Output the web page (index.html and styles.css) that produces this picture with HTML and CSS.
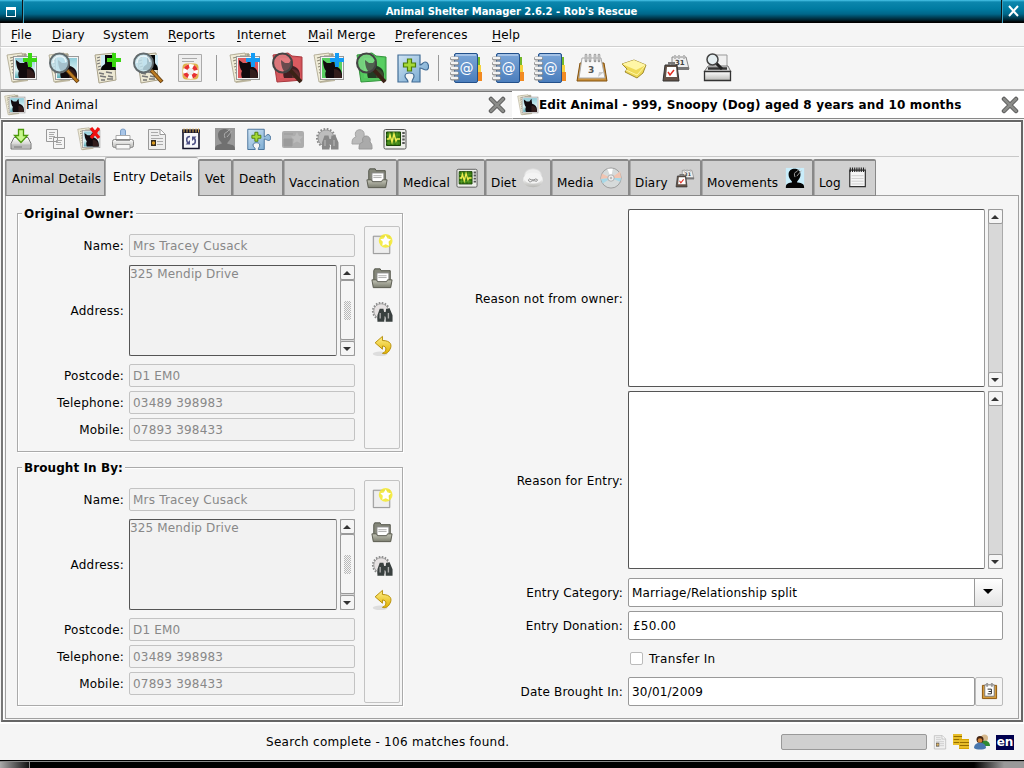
FILE: index.html
```
<!DOCTYPE html>
<html lang="en">
<head>
<meta charset="utf-8">
<title>Animal Shelter Manager 2.6.2 - Rob's Rescue</title>
<link rel="stylesheet" href="styles.css">
</head>
<body>
<svg class="sprite" aria-hidden="true">
  <defs>
    <linearGradient id="sky" x1="0" y1="0" x2="0" y2="1"><stop offset="0" stop-color="#8fcbd8"/><stop offset=".6" stop-color="#d8f2f4"/><stop offset="1" stop-color="#58a9b3"/></linearGradient>
    <linearGradient id="metal" x1="0" y1="0" x2="0" y2="1"><stop offset="0" stop-color="#fff"/><stop offset="1" stop-color="#b8b8b5"/></linearGradient>
    <linearGradient id="blue" x1="0" y1="0" x2="1" y2="1"><stop offset="0" stop-color="#cfe4f4"/><stop offset="1" stop-color="#6fa3cd"/></linearGradient>
    <linearGradient id="book" x1="0" y1="0" x2="0" y2="1"><stop offset="0" stop-color="#7ba6d8"/><stop offset="1" stop-color="#4a7dbc"/></linearGradient>
    <linearGradient id="folder" x1="0" y1="0" x2="0" y2="1"><stop offset="0" stop-color="#c4c5b7"/><stop offset="1" stop-color="#7c7e70"/></linearGradient>
    <linearGradient id="gold" x1="0" y1="0" x2="0" y2="1"><stop offset="0" stop-color="#fff08a"/><stop offset="1" stop-color="#e0b000"/></linearGradient>
  </defs>
  <symbol id="pages" viewBox="0 0 32 32">
    <path d="M5 2l15-1 2 28-15 2z" fill="#bdb7a0"/><path d="M1 3l15-2 5 26-15 3z" fill="#f0ecd8" stroke="#aaa38c" stroke-width=".8"/>
    <path d="M4 6l4-1M4 9l3-1M5 12l3-1M5 15l3-1M6 18l3-1M6 21l3-1M7 24l4-1M7 27l6-1M11 4h5M18 3h3" stroke="#8f8a76" stroke-width="1.1"/>
  </symbol>
  <symbol id="cat" viewBox="0 0 32 32">
    <path d="M10 8l4 3h4l3-4 1 7c4 1 7 4 7 9v3H13c-1-3-1-5 0-7-2-2-3-7-3-11z" fill="#120a0e"/><path d="M21 17c4 0 8 3 8 9h-8z" fill="#331d1c"/>
  </symbol>
  <symbol id="animal" viewBox="0 0 32 32">
    <use href="#pages"/>
    <rect x="7.500" y="4.500" width="23" height="23" fill="#f4f4f4" stroke="#999"/>
    <rect x="9" y="6" width="20" height="20" fill="url(#sky)"/>
    <use href="#cat"/>
  </symbol>
  <symbol id="person" viewBox="0 0 32 32">
    <path d="M2 3l19-2 2 27-17 3z" fill="#ece8d3" stroke="#aaa38c"/><path d="M4 6l3-1M4 9l3-1M4 12l3-1M5 15l3-1M5 18l3-1" stroke="#777" stroke-width="1.200"/>
    <path d="M8 3h15v15H8z" fill="#cdeaf5"/><path d="M12 3h8v7c0 3 3 2 3 8H8c0-6 5-4 4-8z" fill="#050505"/>
    <path d="M6 21l5 1M13 20l6 1M7 24l6 1M15 24l5 1M8 28l4 0M14 27l6 0" stroke="#777" stroke-width="1.300"/>
  </symbol>
  <symbol id="lens" viewBox="0 0 32 32">
    <path d="M19 18l11 12" stroke="#5e3a10" stroke-width="4"/><path d="M19.500 18.500l10 11" stroke="#bc7b20" stroke-width="2.400"/>
    <circle cx="11.500" cy="11" r="9.500" fill="#bfe0ec" fill-opacity=".85" stroke="#626b6e" stroke-width="2"/><path d="M5 11c0-9 12-9 13-1" stroke="#fff" stroke-width="1.500" fill="none" opacity=".7"/>
  </symbol>
  <symbol id="lensclear" viewBox="0 0 32 32">
    <path d="M19 18l11 12" stroke="#3a2216" stroke-width="4"/>
    <circle cx="11.500" cy="11" r="9.500" fill="#fff" fill-opacity=".2" stroke="#444" stroke-width="2"/>
  </symbol>
  <symbol id="plus" viewBox="0 0 16 16"><path d="M6 1h4v5h5v4h-5v5H6v-5H1V6h5z" fill="currentColor"/></symbol>
  <symbol id="ringhelp" viewBox="0 0 32 32">
    <path d="M4.500 2.500h23v27h-23z" fill="#eee" stroke="#aaa"/><path d="M8 6.500h15M8 9.500h12" stroke="#aaa"/>
    <rect x="8.500" y="11.500" width="16" height="16" rx="4" fill="#e0b14a"/><circle cx="16.500" cy="19.500" r="5.500" fill="#eee" stroke="#fff" stroke-width="4"/><circle cx="16.500" cy="19.500" r="5.500" fill="none" stroke="#e73131" stroke-width="4" stroke-dasharray="4.320 4.320" stroke-dashoffset="-2.160"/>
  </symbol>
  <symbol id="puzzle" viewBox="0 0 32 32">
    <path d="M1 3h22v10c2 0 3-3 5-3 4 0 5 8 1 8-2 0-4-2-6-2v14h-8c0-3 2-3 2-6 0-4-9-4-9 0 0 3 3 3 3 6H1z" fill="url(#blue)" stroke="#426d96" stroke-width="1.200"/>
    <path d="M10.500 7h4v4h4v4h-4v4h-4v-4h-4v-4h4z" fill="#a5d936" stroke="#4c7c08" stroke-width="1.200"/>
  </symbol>
  <symbol id="address" viewBox="0 0 32 32">
    <path d="M27 5h3v9h-3z" fill="#73b82a"/><path d="M27 13h4v8h-4z" fill="#f5d33e"/><path d="M27 20h5v9h-5z" fill="#f28a22"/>
    <rect x="4.500" y="1.500" width="23" height="29" rx="1.500" fill="url(#book)" stroke="#22508b"/><path d="M6 3h20" stroke="#cfe0f5"/>
    <path d="M2 6.500h5M2 11.500h5M2 16.500h5M2 21.500h5M2 26.500h5" stroke="#888" stroke-width="4" stroke-linecap="round"/><path d="M2 6h5M2 11h5M2 16h5M2 21h5M2 26h5" stroke="#f3f3f3" stroke-width="2.600" stroke-linecap="round"/>
  </symbol>
  <symbol id="calendar" viewBox="0 0 32 32">
    <path d="M4 11h24l3 18H1z" fill="#cc913b" stroke="#82500c"/><path d="M6 6h19l4 20H3z" fill="#f8f8f8" stroke="#aaa"/><path d="M22 25l1-5h5z" fill="#ccc"/>
    <path d="M10 3v6M14 3v6M19 3v6M23 3v6" stroke="#999" stroke-width="2.600" stroke-linecap="round"/><path d="M10 3v5M14 3v5M19 3v5M23 3v5" stroke="#ddd" stroke-width="1" stroke-linecap="round"/>
  </symbol>
  <symbol id="note" viewBox="0 0 32 32"><path d="M4 12l12-4 12 5-3 8-6 5-12-6 2-3z" fill="#eed957" stroke="#8d7413" stroke-width=".8"/><path d="M4 12l12-4 12 5-10 5z" fill="#fff6a6"/><path d="M8 18l11 5 8-9" stroke="#fff6a6" fill="none"/></symbol>
  <symbol id="diary" viewBox="0 0 32 32">
    <path d="M12 5h14l3 12H12z" fill="#eee" stroke="#888"/><path d="M12 15h17v3H12z" fill="#777"/><path d="M15 3v4M19 3v4M24 3v4" stroke="#bbb" stroke-width="2"/>
    <path d="M5 13h12l2 16H3z" fill="#645247" stroke="#333"/><path d="M7 15h9l1 10H6z" fill="#fff"/><path d="M9 13v-2h5v2" stroke="#777" fill="none" stroke-width="2"/><path d="M8 20l2 3 4-5" stroke="#e32c20" stroke-width="1.500" fill="none"/>
  </symbol>
  <symbol id="printsearch" viewBox="0 0 32 32">
    <path d="M8 3h17v15H8z" fill="#f0f0f0" stroke="#999"/><path d="M6 14h20l3 6H2z" fill="#ddd" stroke="#777"/><path d="M2.500 19.500h26v9h-26z" fill="url(#metal)" stroke="#333" stroke-width="1.300"/><path d="M6 16.500h19" stroke="#333" stroke-width="2.500"/><path d="M14 11l6 6" stroke="#222" stroke-width="3"/><circle cx="10.500" cy="7.500" r="5.500" fill="#e5eef1" stroke="#444" stroke-width="1.500"/>
  </symbol>
  <symbol id="close" viewBox="0 0 18 18"><path d="M3 3l12 12M15 3L3 15" stroke="#5b5b5b" stroke-width="4.500" stroke-linecap="round"/><path d="M3 3l12 12M15 3L3 15" stroke="#8b8c89" stroke-width="2.500" stroke-linecap="round"/></symbol>
  <symbol id="save" viewBox="0 0 24 24"><path d="M5 10.500h14l3 6v5.500H2v-5.500z" fill="url(#metal)" stroke="#777"/><path d="M3 17.500h18v4H3z" fill="#bbb"/><path d="M5 20h8" stroke="#777"/><path d="M9.500 2.500h5v6h4l-6.500 7-6.500-7h4z" fill="#c8f78d" stroke="#4b9a0b" stroke-width="1.300"/></symbol>
  <symbol id="copy" viewBox="0 0 24 24"><path d="M3.500 2.500h11v12h-11zM10.500 10.500h11v11h-11z" fill="#f5f5f5" stroke="#999"/><path d="M6 5.500h6M6 7.500h5M6 9.500h6M6 11.500h3M13 13.500h6M13 15.500h5M13 17.500h6" stroke="#aaa"/></symbol>
  <symbol id="redx" viewBox="0 0 12 12"><path d="M2 1l8 10M10 1L2 11" stroke="#f01010" stroke-width="3.200"/></symbol>
  <symbol id="print" viewBox="0 0 24 24"><path d="M9.500 11V4q0-2 2.500-2t2.500 2v7z" fill="#a9c6e8" stroke="#7c9fc7"/><path d="M5 8.500h14v6H5z" fill="#fff" stroke="#aaa"/><rect x="1.500" y="12.500" width="21" height="8" rx="2" fill="url(#metal)" stroke="#888"/><path d="M5 17.500h14v4.500H5z" fill="#f7f7f7" stroke="#999"/><path d="M5 13.500h14" stroke="#999"/></symbol>
  <symbol id="doc" viewBox="0 0 24 24"><path d="M3.500 2.500h12l5 5v15h-17z" fill="#eee" stroke="#999"/><path d="M15 2.500v5h5" fill="#fff" stroke="#999"/><path d="M6 5.500h7M6 8.500h8M6 11.500h12M12 14.500h6M12 17.500h6" stroke="#aaa"/><path d="M6 13h5v6H6z" fill="#352c20"/><circle cx="8.500" cy="16" r="1.700" fill="#db9c22"/></symbol>
  <symbol id="sync" viewBox="0 0 24 24"><path d="M4 3h16v18.500H4z" fill="#f7f7fa" stroke="#15152c" stroke-width="1.600"/><path d="M3.500 3h17v3h-17z" fill="#15152c"/><path d="M5 1.500v4M8 1.500v4M11 1.500v4M14 1.500v4M17 1.500v4M19.500 1.500v4" stroke="#d8a84b"/><path d="M11 9.500c-4 0-4 4-2 7M13 17.500c4 0 4-4 2-7" fill="none" stroke="#4f5287" stroke-width="1.600"/><path d="M6.500 17.500h4.500v-4.500zM17.500 9.500H13V14z" fill="#4f5287"/></symbol>
  <symbol id="portrait" viewBox="0 0 24 24"><path class="backdrop" d="M2 1h20v22H2z"/><path class="figure" d="M2 23c0-5 2-5 6-6 1 0 1-1 0-2-2-2-3-4-3-7 0-8 13-8 13 0 0 3-1 5-3 7-1 1-1 2 0 2 5 1 7 1 7 6z"/><path d="M12 11q-2-5 2-6l3-3M14 10l5-6" stroke="#aaa" fill="none"/></symbol>
  <symbol id="card" viewBox="0 0 24 24"><rect x="1" y="4" width="22" height="17" rx="2" fill="#adadad"/><path d="M3 12h8v7H3zM3 7h9" fill="#9b9b9b" stroke="#9b9b9b"/><path d="M16 5l2 4 4 .5-3 3 1 4-4-2-4 2 1-4-3-3 4-.5z" fill="#bbb"/></symbol>
  <symbol id="binos" viewBox="0 0 24 24"><circle cx="11" cy="11" r="9" fill="none" stroke="#888" stroke-width="2" stroke-dasharray="1.700 1.600"/><circle cx="11" cy="11" r="8" fill="var(--gear, #e6e2e2)" stroke="#999"/><path d="M9.500 8.500h4l1 4v10H7v-7zM16.500 8.500h4l3 7v7H16V12z" fill="currentColor"/><path d="M13 12h5v5h-5z" fill="currentColor"/><path d="M10 13v6M19 13v6" stroke="#aaa" stroke-width="1.500"/></symbol>
  <symbol id="people" viewBox="0 0 24 24"><path d="M3 17c0-5 1-6 4-7-4-9 10-10 8-1 4 2 4 4 4 8z" fill="#bbb" stroke="#a5a5a5"/><path d="M10 22c0-5 1-6 4-7-3-8 9-8 7 0 2 2 2 3 2 7z" fill="#aaa" stroke="#999"/></symbol>
  <symbol id="monitor" viewBox="0 0 24 24"><rect x="1" y="2.500" width="22" height="19.500" rx="1.500" fill="#eceee9" stroke="#555"/><path d="M3.500 5h14v13.500h-14z" fill="#35780e" stroke="#1a4408"/><path d="M3 8h14M3 12h14M3 16h14M6 5v13M10 5v13M14 5v13" stroke="#62a836" stroke-width=".6"/><path d="M4 12h2l1-4 2 7 2-8 2 7 1-2h3" stroke="#f0ec52" stroke-width="1.400" fill="none"/><path d="M20.500 5v13" stroke="#555" stroke-width="2.500" stroke-dasharray="2 1.300"/></symbol>
  <symbol id="folderopen" viewBox="0 0 24 24"><path d="M3 4l1-2h6l1 2h10v16H3z" fill="#85877a" stroke="#4c4e43"/><path d="M6.500 6.500h13v10h-13z" fill="#fff" stroke="#888"/><path d="M8 9.500h9M8 11.500h9" stroke="#aaa"/><path d="M1 14h5l1 2h10l1-2h5l-1.500 8.500h-19z" fill="url(#folder)" stroke="#55574b"/></symbol>
  <symbol id="food" viewBox="0 0 24 24"><ellipse cx="12" cy="8" rx="9" ry="6" fill="#eee" stroke="#ddd"/><path d="M2 11h20l1 4q-2 7-11 7T1 15z" fill="url(#metal)"/><ellipse cx="12" cy="12" rx="10" ry="6" fill="#f4f4f4"/><path d="M7 14q1-2 3 0h3q2-2 4 0-1 3-3 1h-3q-3 3-4-1z" fill="none" stroke="#888"/></symbol>
  <symbol id="disc" viewBox="0 0 24 24"><circle cx="12" cy="12" r="11" fill="#d6dada" stroke="#999"/><path d="M12 12L2 7l-1 6zM12 12l10-7 1 7z" fill="#f1c4b1"/><path d="M12 12L1 13l2 5zM12 12l11 0-1 4z" fill="#a7d8e7"/><path d="M12 12L8 2h6z" fill="#fff"/><circle cx="12" cy="12" r="3.500" fill="#eee" stroke="#aaa"/><circle cx="12" cy="12" r="1.300" fill="#bbb"/></symbol>
  <symbol id="pad" viewBox="0 0 24 24"><path d="M3 3.500h17v18H3z" fill="#f5f5f5" stroke="#333" stroke-width="1.300"/><path d="M5 9.500h13M5 12.500h13M5 15.500h13M5 18.500h13" stroke="#ccc"/><path d="M3 3h17" stroke="#222" stroke-width="5" stroke-dasharray="1.200 1.200"/></symbol>
  <symbol id="newdoc" viewBox="0 0 24 24"><path d="M2.500 3.500h18v19h-18z" fill="#e6e6e6" stroke="#8b8b8b"/><path d="M4 5h15v16H4z" fill="#eee"/><circle cx="16" cy="8.500" r="7.500" fill="#f5ea2c" opacity=".85"/><path d="M16 2.500l2 3.400 3.800.9-2.700 2.800.6 4.400-3.700-1.800-3.700 1.800.6-4.400-2.700-2.800 3.800-.9z" fill="#fff"/></symbol>
  <symbol id="undo" viewBox="0 0 24 24"><ellipse cx="10" cy="20.500" rx="8" ry="2.500" fill="#ddd"/><path d="M4.500 8.500l8-7v4.500c9 0 11 5 8 10-2 4-5 5-8 4 5-2 5-8 0-8v3.500z" fill="url(#gold)" stroke="#b38a00"/></symbol>
  <symbol id="coins" viewBox="0 0 16 16"><path d="M0 0h9v11H0zM6 5h10v10H6z" fill="#d8a500"/><path d="M0 1h9M0 4h9M0 7h6M0 10h6M6 7h10M6 10h10M6 13h10" stroke="#ffe36a" stroke-width=".8"/><path d="M1 2.500h8M1 5.500h5M1 8.500h5M7 8.500h9M7 11.500h9" stroke="#8d6800" stroke-width=".9"/></symbol>
  <symbol id="users" viewBox="0 0 16 16"><circle cx="10.500" cy="4" r="3.500" fill="#d6b88c"/><path d="M6 12c0-7 10-7 10 0z" fill="#2f8a33"/><circle cx="6" cy="5.500" r="3.500" fill="#422414"/><circle cx="6" cy="6.500" r="2.300" fill="#d48235"/><path d="M0 14c0-7 12-7 12 0-2 2-10 2-12 0z" fill="#4877ae"/></symbol>
</svg>

<div class="window">
  <header class="titlebar">
    <span class="winmenu"><i></i></span>
    <h1>Animal Shelter Manager 2.6.2 - Rob's Rescue</h1>
    <svg class="winclose" viewBox="0 0 21 23"><path d="M6 6l9 10M15 6L6 16" stroke="#fff" stroke-width="2"/></svg>
  </header>

  <nav class="menubar">
    <span><u>F</u>ile</span><span><u>D</u>iary</span><span>System</span><span><u>R</u>eports</span><span><u>I</u>nternet</span><span><u>M</u>ail Merge</span><span><u>P</u>references</span><span><u>H</u>elp</span>
  </nav>

  <div class="toolbar">
    <span class="tool"><svg><use href="#animal"/><use class="lime" href="#plus" x="16" y="0" width="16" height="16"/></svg></span>
    <span class="tool"><svg><use href="#animal"/><use href="#lens"/></svg></span>
    <span class="tool"><svg><use href="#person" x="3"/><use class="lime" href="#plus" x="16" y="0" width="16" height="16"/></svg></span>
    <span class="tool"><svg><use href="#person" x="3"/><use href="#lens"/></svg></span>
    <span class="tool"><svg><use href="#ringhelp"/></svg></span>
    <i class="sep"></i>
    <span class="tool red"><svg><use href="#animal"/><rect class="tint" x="9" y="6" width="20" height="20"/><use href="#cat"/><use class="azure" href="#plus" x="16" y="0" width="16" height="16"/></svg></span>
    <span class="tool red"><svg><path class="sheet" d="M2 3l15-2 4 3 10 1v23l-11 1-14 1z"/><rect class="tint" x="9" y="6" width="20" height="20"/><use class="dim" href="#cat"/><use href="#lensclear"/></svg></span>
    <span class="tool green"><svg><use href="#animal"/><rect class="tint" x="9" y="6" width="20" height="20"/><use href="#cat"/><use class="azure" href="#plus" x="16" y="0" width="16" height="16"/></svg></span>
    <span class="tool green"><svg><path class="sheet" d="M2 3l15-2 4 3 10 1v23l-11 1-14 1z"/><rect class="tint" x="9" y="6" width="20" height="20"/><use class="dim" href="#cat"/><use href="#lensclear"/></svg></span>
    <span class="tool"><svg><use href="#puzzle"/></svg></span>
    <i class="sep second"></i>
    <span class="tool"><svg><use href="#address"/><text x="9.500" y="21" class="at">@</text></svg></span>
    <span class="tool"><svg><use href="#address"/><text x="9.500" y="21" class="at">@</text></svg></span>
    <span class="tool"><svg><use href="#address"/><text x="9.500" y="21" class="at">@</text></svg></span>
    <span class="tool"><svg><use href="#calendar"/><text x="12" y="21" class="cal">3</text></svg></span>
    <span class="tool"><svg><use href="#note"/></svg></span>
    <span class="tool"><svg><use href="#diary"/><text x="15" y="13" class="small">31</text></svg></span>
    <span class="tool"><svg><use href="#printsearch"/></svg></span>
  </div>

  <div class="doctabs">
    <div class="doctab"><svg class="i24"><use href="#animal"/></svg><span>Find Animal</span><svg class="i18"><use href="#close"/></svg></div>
    <div class="doctab current"><svg class="i24"><use href="#animal"/></svg><b>Edit Animal - 999, Snoopy (Dog) aged 8 years and 10 months</b><svg class="i18"><use href="#close"/></svg></div>
  </div>

  <main class="frame">
    <div class="subbar">
      <svg><use href="#save"/></svg>
      <svg><use href="#copy"/></svg>
      <svg><use href="#animal"/><use href="#redx" x="12" y="0" width="12" height="12"/></svg>
      <svg><use href="#print"/></svg>
      <svg><use href="#doc"/></svg>
      <svg><use href="#sync"/></svg>
      <svg class="muted"><use href="#portrait"/></svg>
      <svg><use href="#puzzle"/></svg>
      <svg><use href="#card"/></svg>
      <svg class="gray"><use href="#binos"/></svg>
      <svg><use href="#people"/></svg>
      <svg><use href="#monitor"/></svg>
    </div>

    <div class="tabs">
      <span class="tab">Animal Details</span><span class="tab active">Entry Details</span><span class="tab">Vet</span><span class="tab">Death</span>
      <span class="tab pic">Vaccination<svg><use href="#folderopen"/></svg></span>
      <span class="tab pic">Medical<svg><use href="#monitor"/></svg></span>
      <span class="tab pic">Diet<svg><use href="#food"/></svg></span>
      <span class="tab pic">Media<svg><use href="#disc"/></svg></span>
      <span class="tab pic">Diary<svg viewBox="0 0 32 32"><use href="#diary"/><text x="15" y="13" class="small">31</text></svg></span>
      <span class="tab pic">Movements<svg><use href="#portrait"/></svg></span>
      <span class="tab pic">Log<svg><use href="#pad"/></svg></span>
    </div>

    <section class="panel">
      <div class="owners">
        <section class="group">
          <h2>Original Owner:</h2>
          <div class="fields">
            <label>Name:</label><div class="input off">Mrs Tracey Cusack</div>
            <label>Address:</label>
            <div class="area off"><div class="text">325 Mendip Drive</div><div class="scroll"><i class="btn up"></i><i class="thumb"></i><i class="btn down"></i></div></div>
            <label>Postcode:</label><div class="input off">D1 EM0</div>
            <label>Telephone:</label><div class="input off">03489 398983</div>
            <label>Mobile:</label><div class="input off">07893 398433</div>
          </div>
          <div class="side"><svg><use href="#newdoc"/></svg><svg><use href="#folderopen"/></svg><svg><use href="#binos"/></svg><svg><use href="#undo"/></svg></div>
        </section>
        <section class="group">
          <h2 class="tight">Brought In By:</h2>
          <div class="fields">
            <label>Name:</label><div class="input off">Mrs Tracey Cusack</div>
            <label>Address:</label>
            <div class="area off"><div class="text">325 Mendip Drive</div><div class="scroll"><i class="btn up"></i><i class="thumb"></i><i class="btn down"></i></div></div>
            <label>Postcode:</label><div class="input off">D1 EM0</div>
            <label>Telephone:</label><div class="input off">03489 398983</div>
            <label>Mobile:</label><div class="input off">07893 398433</div>
          </div>
          <div class="side"><svg><use href="#newdoc"/></svg><svg><use href="#folderopen"/></svg><svg><use href="#binos"/></svg><svg><use href="#undo"/></svg></div>
        </section>
      </div>

      <div class="entry">
        <label class="reason">Reason not from owner:</label><div class="area"><div class="text"></div><div class="scroll"><i class="btn up"></i><i class="btn down"></i></div></div>
        <label class="reason second">Reason for Entry:</label><div class="area"><div class="text"></div><div class="scroll"><i class="btn up"></i><i class="btn down"></i></div></div>
        <label>Entry Category:</label><div class="input combo"><span>Marriage/Relationship split</span><i class="drop"></i></div>
        <label>Entry Donation:</label><div class="input donation">£50.00</div>
        <span></span><div class="check"><i></i>Transfer In</div>
        <label>Date Brought In:</label><div class="date"><div class="input">30/01/2009</div><span class="pick"><svg viewBox="0 0 18 18"><path d="M1.500 2.500h15v14h-15z" fill="#d49a3b" stroke="#8a5309"/><path d="M4 2h10v12H4z" fill="#fff" stroke="#777"/><path d="M6.500 0v4M11.500 0v4" stroke="#999" stroke-width="2"/><path d="M7 6.500h4v5H7M8 9h3" fill="none" stroke="#222"/></svg></span></div>
      </div>
    </section>
  </main>

  <footer class="status">
    <span class="msg">Search complete - 106 matches found.</span>
    <span class="progress"></span>
    <svg class="faded"><use href="#doc"/></svg><svg><use href="#coins"/></svg><svg><use href="#users"/></svg><b>en</b>
  </footer>
  <div class="edge"><i></i><i></i><i></i></div>
</div>
</body>
</html>
```
FILE: styles.css
```
* { box-sizing: border-box; }
body { margin: 0; background: #f5f5f5; color: #000; font: 12px/16px "DejaVu Sans", sans-serif; letter-spacing: .2px; }
.sprite { position: absolute; width: 0; height: 0; }
svg { flex: none; display: block; overflow: visible; }
.window { width: 1024px; height: 768px; display: flex; flex-direction: column; overflow: hidden; }

.titlebar { height: 23px; flex: none; display: flex; align-items: stretch; color: #fff; background: linear-gradient(#4bc5ea 0, #0c86ad 2px, #007ba1 9px, #00678a 14px, #00212d 20px, #000 22px); }
.titlebar h1 { flex: 1; margin: 0; text-align: center; font-size: 10px; line-height: 24px; letter-spacing: -.05px; padding-right: 2px; }
.winmenu { width: 23px; display: flex; align-items: center; justify-content: center; border-right: 1px solid #111; box-shadow: 1px 0 #3aa0c0; }
.winmenu i { width: 10px; height: 10px; border: 1px solid #fff; border-top-width: 3px; }
.winclose { width: 22px; height: 23px; border-left: 1px solid #3aa0c0; box-shadow: -1px 0 #111; }

.menubar { height: 24px; flex: none; padding-left: 10px; border-left: 1px solid #ccc; border-bottom: 1px solid #d0d0d0; display: grid; grid-template-columns: 41px 51px 65px 69px 71px 87px 97px 60px; line-height: 24px; letter-spacing: .18px; }
.menubar u { text-underline-offset: 2px; }

.toolbar { height: 42px; flex: none; display: flex; align-items: center; border-top: 1px solid #fff; border-left: 1px solid #ccc; padding-bottom: 2px; }
.tool { width: 42px; height: 34px; padding: 1px 5px; }
.tool svg { width: 32px; height: 32px; }
.sep { width: 1px; height: 26px; background: #999; margin: 0 7px 0 5px; }
.sep.second { margin: 0 6px 0 4px; }
.red .tint { fill: #dd5a60; }
.green .tint { fill: #58cf62; }
.red .sheet { fill: #d3555b; stroke: #a9383e; }
.green .sheet { fill: #53c65d; stroke: #32963b; }
.dim { opacity: .75; }
.lime { color: #3bd711; }
.azure { color: #139bf4; }
.at { font: 14px "DejaVu Sans", sans-serif; fill: #fff; letter-spacing: 0; }
.cal { font: bold 9px "DejaVu Sans", sans-serif; fill: #555; letter-spacing: 0; }
.small { font: bold 7px "DejaVu Sans", sans-serif; fill: #444; letter-spacing: 0; }

.doctabs { height: 31px; flex: none; display: grid; grid-template-columns: 512px 512px; border-top: 2px solid #b5b5b5; letter-spacing: .18px; }
.doctab { height: 28px; display: flex; align-items: center; padding: 0 6px 0 3px; border-top: 1px solid #777; border-left: 1px solid #999; border-bottom: 1px solid #aaa; box-shadow: inset 0 -1px #fff; }
.doctab.current { background: #fff; border-top-color: #fff; border-left-color: #fff; border-bottom-color: #888; padding: 0 5px 0 4px; }
.doctab .i24 { width: 22px; height: 22px; }
.doctab .i18 { width: 18px; height: 18px; margin-left: auto; }
.doctab b { font-size: 12px; letter-spacing: .16px; }

.frame { flex: none; height: 602px; margin: 0 1px; border: 2px solid #666; border-left-color: #777; padding: 1px 2px 1px; display: flex; flex-direction: column; box-shadow: inset 1px 1px #fff; }
.subbar { height: 34px; flex: none; display: flex; gap: 10px; align-items: center; padding: 0 0 2px 4px; border-bottom: 1px solid #c8c8c8; }
.subbar svg { width: 24px; height: 24px; }
.gray { color: #888; --gear: #bdbdbd; }
.backdrop { fill: var(--back, #c9edfa); }
.figure { fill: var(--fig, #050505); }
.muted { --back: #999; --fig: #707070; }

.tabs { height: 39px; flex: none; display: grid; grid-template-columns: 100px 93px 34px 51px 114px 88px 66px 78px 72px 112px 63px; align-items: end; position: relative; z-index: 1; }
.tab { height: 37px; padding: 1px 0 0 6px; display: flex; align-items: center; background: #d0d0d0; border: 2px solid #888; border-width: 2px 1px 1px; white-space: nowrap; border-radius: 2px 2px 0 0; box-shadow: inset 1px 0 #aaa; letter-spacing: .15px; }
.tab svg { width: 22px; height: 22px; margin: -9px 0 0 6px; }
.tab.pic { padding: 9px 0 0 5px; }
.tab.active { height: 39px; padding: 0 0 0 7px; background: #f5f5f5; border-width: 1px 0 0 1px; border-color: #aaa; box-shadow: none; }

.panel { flex: 1; border: 1px solid #a0a0a0; margin-top: -1px; display: flex; padding: 13px 15px 12px 11px; }
.owners { width: 386px; display: flex; flex-direction: column; gap: 15px; padding-top: 4px; }
.group { height: 239px; border: 1px solid #aaa; box-shadow: inset 1px 1px #fff, 1px 1px #fff; display: grid; grid-template-columns: 337px 36px; gap: 0 9px; position: relative; padding-top: 12px; }
.group h2 { position: absolute; left: 4px; top: -8px; margin: 0; padding: 0 2px; background: #f5f5f5; font-size: 12px; line-height: 17px; letter-spacing: .23px; }
.group h2.tight { letter-spacing: .08px; }
.fields { display: grid; grid-template-columns: 107px 226px; column-gap: 4px; grid-template-rows: 23px 99px 23px 23px 23px; row-gap: 4px; padding-top: 8px; }
.fields .area { margin-top: 4px; height: 91px; }
.fields label { padding-right: 1px; }
label { text-align: right; align-self: center; white-space: nowrap; }
.input { border: 1px solid #999; border-radius: 2px; background: #fff; padding: 0 3px; display: flex; align-items: center; white-space: nowrap; }
.input.off { background: #f2f2f2; border-color: #c3c3c3; color: #888; }
.area { display: grid; grid-template-columns: 1fr 15px; gap: 3px; }
.area .text { border: 1px solid #555; border-right-color: #999; border-radius: 2px; background: #fff; }
.area.off .text { background: #f2f2f2; color: #888; letter-spacing: .15px; }
.scroll { display: flex; flex-direction: column; background: #d8d8d8; border: solid #aaa; border-width: 0 1px; }
.btn { height: 15px; margin: 0 -1px; background: #f5f5f5; border: 1px solid #999; border-radius: 2px; display: flex; align-items: center; justify-content: center; }
.btn::after { content: ""; margin-right: 1px; border: 4px solid transparent; border-top-width: 0; border-bottom: 4px solid #333; }
.btn.down::after { border-top: 4px solid #333; border-bottom-width: 0; }
.btn.down { margin-top: auto; }
.thumb { flex: 1; margin: 0 -1px 1px; border: 1px solid #999; border-radius: 2px; background: #f5f5f5; display: flex; align-items: center; justify-content: center; }
.thumb::after { content: ""; width: 7px; height: 19px; background: conic-gradient(#b8b8b8 25%, #f5f5f5 0 50%, #b8b8b8 0 75%, #f5f5f5 0) 0 0 / 2px 2px; }
.side { height: 223px; border: 1px solid #c3c3c3; border-radius: 2px; display: flex; flex-direction: column; align-items: center; gap: 12px; padding-top: 6px; color: #39403f; }
.side svg { width: 22px; height: 22px; }

.entry { flex: 1; display: grid; grid-template-columns: 220px 375px; column-gap: 5px; justify-content: end; align-content: start; grid-template-rows: 178px 183px 29px 29px 29px 29px; row-gap: 4px; }
.entry .area { height: 178px; }
.entry .reason { padding-top: 2px; }
.entry .second { padding-bottom: 5px; }
.donation { padding-left: 4px; }
.combo { padding-right: 0; justify-content: space-between; align-items: stretch; line-height: 28px; }
.drop { width: 28px; border-left: 1px solid #999; background: linear-gradient(#fff, #e4e4e4); display: flex; align-items: center; justify-content: center; }
.drop::after { content: ""; border: 5px solid transparent; border-top-color: #000; border-bottom-width: 0; margin: -2px 1px 0 0; }
.check { display: flex; align-items: center; gap: 6px; padding-left: 2px; letter-spacing: .3px; }
.check i { width: 13px; height: 13px; background: #fff; border: 1px solid #bbb; border-radius: 2px; }
.date { display: grid; grid-template-columns: 347px 28px; }
.pick { border: 1px solid #bbb; border-radius: 2px; display: flex; align-items: center; justify-content: center; }
.pick svg { width: 17px; height: 17px; }

.status { height: 38px; flex: none; display: flex; align-items: center; padding-right: 10px; border-top: 2px solid #fff; }
.msg { flex: 1; padding-left: 266px; letter-spacing: .28px; }
.progress { width: 146px; height: 16px; background: #d0d0d0; border: 1px solid #999; border-radius: 2px; margin-right: 5px; }
.status svg { width: 16px; height: 16px; margin-right: 5px; }
.status svg:last-of-type { margin-right: 6px; }
.status .faded { opacity: .7; }
.status b { background: #00004e; color: #fff; width: 18px; height: 15px; line-height: 15px; text-align: center; font-size: 12px; letter-spacing: 0; }
.edge { flex: 1; display: flex; justify-content: space-between; background: #000; border-top: 1px solid #000; box-shadow: inset 0 1px #888; }
.edge i { margin-top: 1px; }
.edge i:first-child { width: 30px; background: linear-gradient(90deg, #aaa, #111); border-right: 1px solid #888; }
.edge i:nth-child(2) { flex: 1; }
.edge i:last-child { width: 50px; background: linear-gradient(90deg, #000, #999 60%); }
```
